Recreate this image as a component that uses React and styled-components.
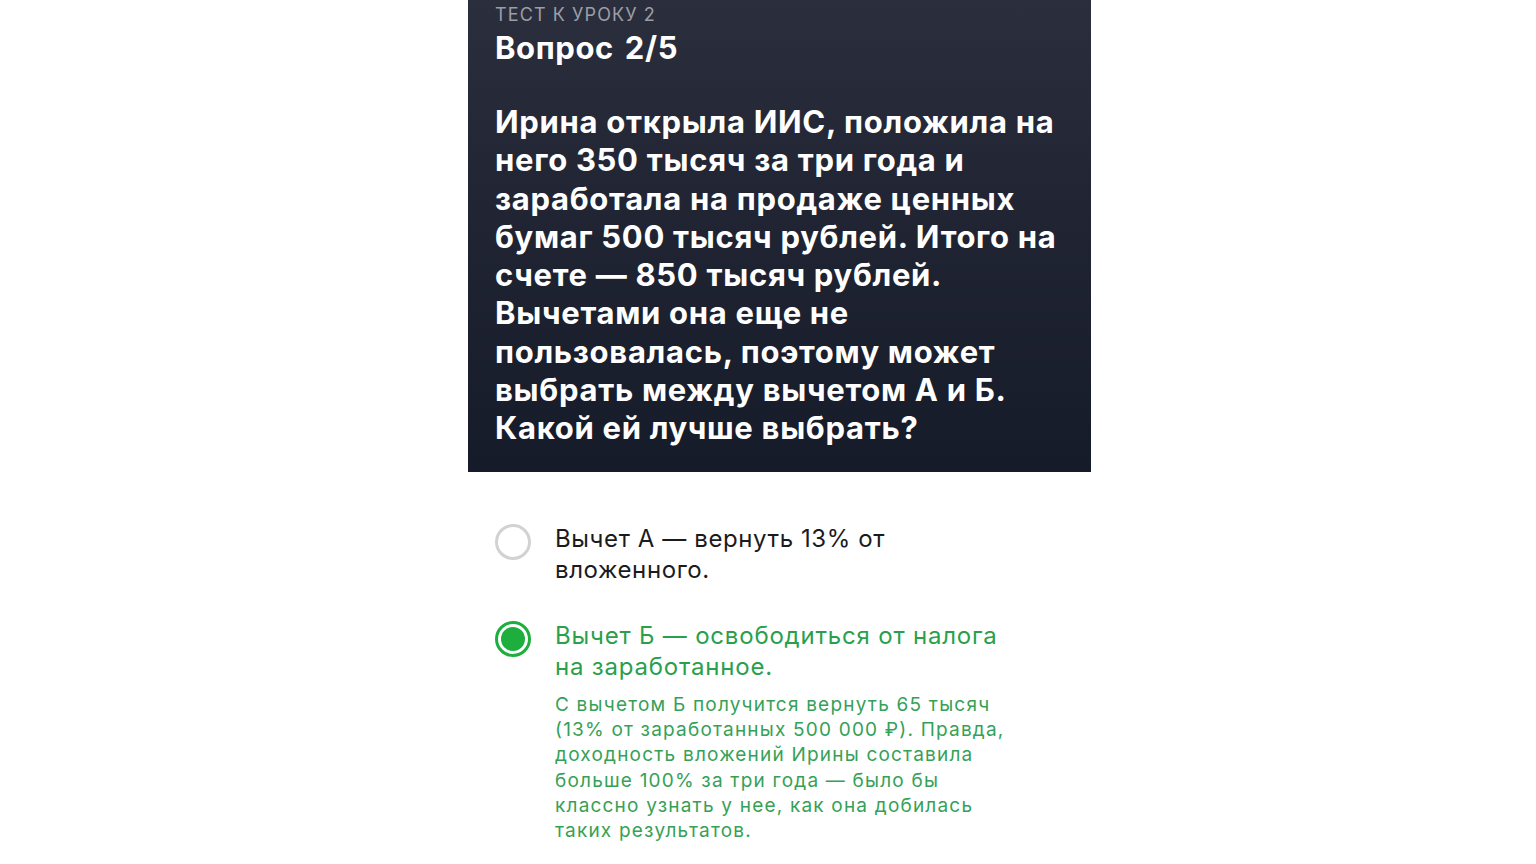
import React from 'react'
import styled, { createGlobalStyle } from 'styled-components'

const GlobalStyle = createGlobalStyle`
  body {
    margin: 0;
    background: #ffffff;
    font-family: Inter, "Noto Sans", sans-serif;
  }
`

const Page = styled.div`
  width: 623px;
  margin-left: 468px;
`

const QuestionCard = styled.div`
  background: linear-gradient(180deg, #2b2e3c 0%, #222634 40%, #161b29 100%);
  padding: 2px 27px 24px;
  color: #ffffff;
`

const Label = styled.div`
  font-size: 18px;
  line-height: 26px;
  color: #9b9ea8;
  text-transform: uppercase;
  letter-spacing: 1.1px;
`

const Counter = styled.h2`
  margin: 0;
  font-size: 31px;
  line-height: 40px;
  font-weight: 700;
  letter-spacing: 0.6px;
  word-spacing: 3px;
`

const QuestionText = styled.p`
  margin: 35px 0 0;
  font-size: 31px;
  line-height: 38.3px;
  font-weight: 700;
  letter-spacing: 0.7px;
`

const Options = styled.div`
  padding: 51px 27px 0;
  display: flex;
  flex-direction: column;
  gap: 34px;
`

const Option = styled.div`
  display: flex;
  gap: 24px;
  align-items: flex-start;
`

const Radio = styled.div`
  flex: none;
  width: 36px;
  height: 36px;
  border-radius: 50%;
  box-sizing: border-box;
  margin-top: 1px;
  border: 3px solid ${p => (p.$checked ? '#1eae3e' : '#d2d2d4')};
  display: flex;
  align-items: center;
  justify-content: center;
  &::after {
    content: "";
    display: ${p => (p.$checked ? 'block' : 'none')};
    width: 24px;
    height: 24px;
    border-radius: 50%;
    background: #1eae3e;
  }
`

const Body = styled.div`
  width: 468px;
`

const OptionText = styled.div`
  font-size: 24px;
  line-height: 31.5px;
  letter-spacing: ${p => (p.$checked ? '0.8px' : '0.6px')};
  color: ${p => (p.$checked ? '#2a9f4c' : '#1b1b1d')};
`

const Explanation = styled.div`
  margin-top: 9px;
  font-size: 19px;
  line-height: 25.3px;
  letter-spacing: 1.2px;
  color: #35a157;
`

export default function App() {
  return (
    <Page>
      <GlobalStyle />
      <QuestionCard>
        <Label>Тест к уроку 2</Label>
        <Counter>Вопрос 2/5</Counter>
        <QuestionText>
          Ирина открыла ИИС, положила на него 350 тысяч за три года и заработала на продаже ценных бумаг 500 тысяч рублей. Итого на счете — 850 тысяч рублей. Вычетами она еще не пользовалась, поэтому может выбрать между вычетом А и Б. Какой ей лучше выбрать?
        </QuestionText>
      </QuestionCard>
      <Options>
        <Option>
          <Radio />
          <Body>
            <OptionText>Вычет А — вернуть 13% от вложенного.</OptionText>
          </Body>
        </Option>
        <Option>
          <Radio $checked />
          <Body>
            <OptionText $checked>Вычет Б — освободиться от налога на заработанное.</OptionText>
            <Explanation>
              С вычетом Б получится вернуть 65 тысяч (13% от заработанных 500 000 ₽). Правда, доходность вложений Ирины составила больше 100% за три года — было бы классно узнать у нее, как она добилась таких результатов.
            </Explanation>
          </Body>
        </Option>
      </Options>
    </Page>
  )
}
